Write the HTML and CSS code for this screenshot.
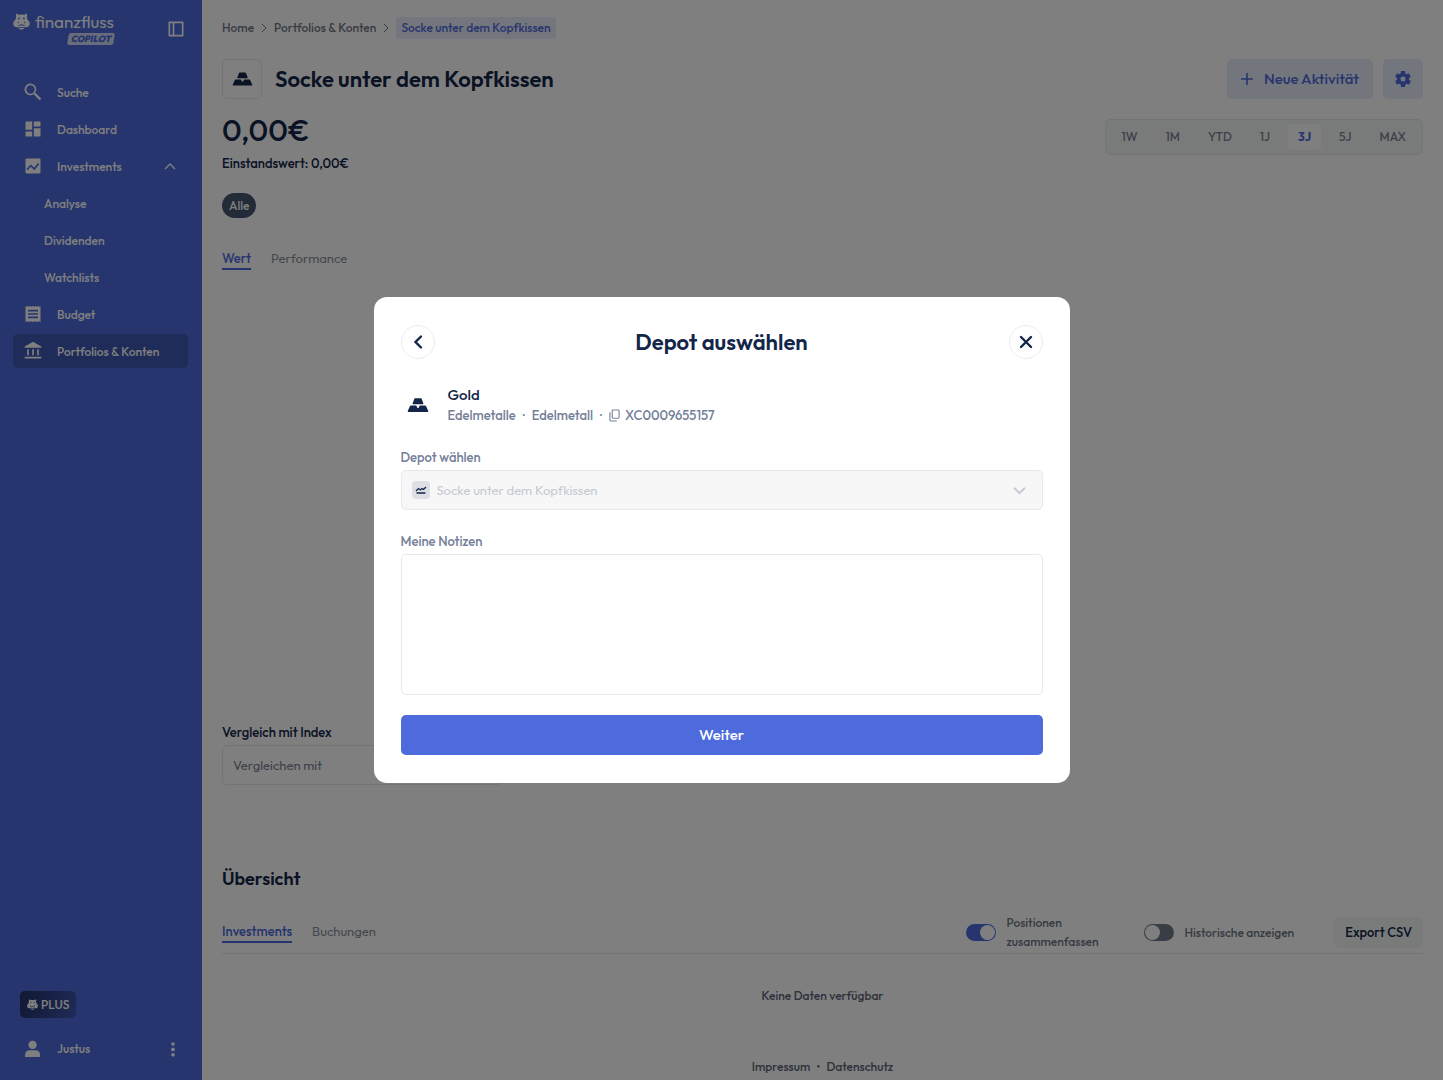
FILE: index.html
```
<!DOCTYPE html>
<html lang="de">
<head>
    <meta charset="UTF-8">
    <meta name="viewport" content="width=device-width, initial-scale=1.0">
    <title>Socke unter dem Kopfkissen | Finanzfluss Copilot</title>
    <link rel="stylesheet" href="styles.css">
</head>
<body>
    <svg class="sprite" aria-hidden="true">
        <symbol id="hippo" viewBox="0 0 24 24">
            <path fill-rule="evenodd" d="M6.2 1.2l1.7 1.5c2.6-.6 5.6-.6 8.2 0l1.7-1.5c1-.6 2.2.1 2.3 1.3.1.8-.2 1.5-.6 2 .6 1.4.7 3.2.9 5 2 1.4 3.3 3.4 3.3 5.7 0 3-2.3 5-5.3 5H5.600c-3 0-5.300-2-5.300-5 0-2.300 1.300-4.300 3.300-5.700.2-1.800.3-3.600.9-5-.4-.5-.7-1.200-.6-2 .1-1.200 1.300-1.900 2.300-1.300zM8.500 6.300a1.300 1.300 0 1 0 0 2.600 1.300 1.300 0 0 0 0-2.600zM15.500 6.300a1.300 1.300 0 1 0 0 2.600 1.300 1.300 0 0 0 0-2.600zM7.600 12.500a1 1 0 1 0 0 2 1 1 0 0 0 0-2zM16.400 12.500a1 1 0 1 0 0 2 1 1 0 0 0 0-2zM6.500 17.400c1.600 1 3.500.7 5.500-.6 2 1.300 3.900 1.600 5.500.6l-.4-.8c-1.400.7-3 .4-5.100-1.200-2.100 1.600-3.700 1.900-5.100 1.200z"/>
            <path d="M8 21.200h8c-.5 1.400-2 2.100-4 2.100s-3.500-.7-4-2.100z"/>
        </symbol>
        <symbol id="gold" viewBox="0 0 24 16">
            <path d="M8 1.200Q8.300.5 9 .5h6q.7 0 1 .7L17.900 6.400q.3.800-.6.800H6.700q-.9 0-.6-.8zM3.300 9.200Q3.600 8.500 4.300 8.500h5.300l1 .7.300 1.500q1.100.9 2.200 0l.3-1.500 1-.7h5.300q.7 0 1 .7l2.500 5.400q.4.900-.6.900H1.400q-1 0-.6-.9z"/>
        </symbol>
    </svg>

    <div class="app">
        <aside class="sidebar">
            <div class="sidebar-head">
                <a href="#" class="logo">
                    <svg class="logo-hippo"><use href="#hippo"/></svg>
                    <span class="logo-name">finanzfluss</span>
                    <span class="logo-badge">COPILOT</span>
                </a>
                <button class="icon-button" aria-label="Menü einklappen">
                    <svg class="icon" viewBox="0 0 24 24"><path fill-rule="evenodd" d="M4 3h16q1 0 1 1v16q0 1-1 1H4q-1 0-1-1V4q0-1 1-1zM5 5v14h3V5zM10 5v14h9V5z"/></svg>
                </button>
            </div>

            <nav class="nav">
                <a href="#" class="nav-item">
                    <svg class="icon" viewBox="0 0 24 24"><path d="M15.500 13.500h-.8l-.3-.3A7 7 0 1 0 13.200 14.400l.3.300v.8l6.500 6.500 2-2zM9 14a5 5 0 1 1 0-10 5 5 0 0 1 0 10z"/></svg>
                    <span>Suche</span>
                </a>
                <a href="#" class="nav-item">
                    <svg class="icon" viewBox="0 0 24 24"><path d="M3 13h8V3H3v10zm0 8h8v-6H3v6zm10 0h8V11h-8v10zm0-18v6h8V3h-8z"/></svg>
                    <span>Dashboard</span>
                </a>
                <a href="#" class="nav-item">
                    <svg class="icon" viewBox="0 0 24 24"><path fill-rule="evenodd" d="M4.500 3h15Q21 3 21 4.500v15q0 1.500-1.500 1.500h-15Q3 21 3 19.500v-15Q3 3 4.500 3zM5.500 17l4-4 4 4 6-7.200-1.500-1.300-4.600 5.500-3.900-3.900L4.400 15.200z"/></svg>
                    <span>Investments</span>
                    <svg class="nav-arrow" viewBox="0 0 12 12"><path d="M1 9l5-5 5 5"/></svg>
                </a>
                <a href="#" class="nav-item nav-sub"><span>Analyse</span></a>
                <a href="#" class="nav-item nav-sub"><span>Dividenden</span></a>
                <a href="#" class="nav-item nav-sub"><span>Watchlists</span></a>
                <a href="#" class="nav-item">
                    <svg class="icon" viewBox="0 0 24 24"><path fill-rule="evenodd" d="M3 2l1.500 1.500L6 2l1.500 1.500L9 2l1.500 1.500L12 2l1.500 1.500L15 2l1.500 1.500L18 2l1.500 1.500L21 2v20l-1.500-1.500L18 22l-1.500-1.500L15 22l-1.500-1.500L12 22l-1.500-1.500L9 22l-1.500-1.500L6 22l-1.500-1.500L3 22zM6 7v2h12V7zM6 11v2h12v-2zM6 15v2h12v-2z"/></svg>
                    <span>Budget</span>
                </a>
                <a href="#" class="nav-item nav-active">
                    <svg class="icon" viewBox="0 0 24 24"><path d="M12 1l10 5.500V8H2V6.500zM5 10h2v7H5zM11 10h2v7h-2zM17 10h2v7h-2zM2 19h20v2H2z"/></svg>
                    <span>Portfolios &amp; Konten</span>
                </a>
            </nav>

            <div class="sidebar-foot">
                <button class="plus-button"><svg class="plus-hippo"><use href="#hippo"/></svg>PLUS</button>
                <div class="user">
                    <svg class="icon" viewBox="0 0 24 24"><circle cx="11.500" cy="7" r="5"/><path d="M2.500 21.500v-2q0-6 6-6h6q6 0 6 6v2z"/></svg>
                    <span>Justus</span>
                    <button class="icon-button user-menu" aria-label="Benutzermenü">
                        <svg class="icon" viewBox="0 0 24 24"><circle cx="12" cy="6" r="2.200"/><circle cx="12" cy="12.500" r="2.200"/><circle cx="12" cy="19" r="2.200"/></svg>
                    </button>
                </div>
            </div>
        </aside>

        <main class="main">
            <nav class="breadcrumb" aria-label="Breadcrumb">
                <a href="#">Home</a>
                <svg class="crumb-arrow" viewBox="0 0 8 12"><path d="M2 2l4 4-4 4"/></svg>
                <a href="#">Portfolios &amp; Konten</a>
                <svg class="crumb-arrow" viewBox="0 0 8 12"><path d="M2 2l4 4-4 4"/></svg>
                <a href="#" class="crumb-current">Socke unter dem Kopfkissen</a>
            </nav>

            <header class="page-head">
                <div class="page-icon"><svg class="gold-small"><use href="#gold"/></svg></div>
                <h1>Socke unter dem Kopfkissen</h1>
                <button class="soft-button">
                    <svg class="plus-sign" viewBox="0 0 12 12"><path d="M6 0v12M0 6h12"/></svg>
                    Neue Aktivität
                </button>
                <button class="soft-button soft-square" aria-label="Einstellungen">
                    <svg class="icon" viewBox="0 0 24 24"><path d="M19.140 12.940c.04-.3.06-.61.06-.94 0-.32-.02-.64-.07-.94l2.030-1.580c.18-.14.23-.41.12-.61l-1.920-3.320c-.12-.22-.37-.29-.59-.22l-2.390.96c-.5-.38-1.030-.7-1.620-.94l-.36-2.540c-.04-.24-.24-.41-.48-.41h-3.840c-.24 0-.43.17-.47.41l-.36 2.540c-.59.24-1.130.57-1.620.94l-2.390-.96c-.22-.08-.47 0-.59.22L2.740 8.870c-.12.21-.08.47.12.61l2.030 1.580c-.05.3-.09.63-.09.94s.02.64.07.94l-2.030 1.580c-.18.14-.23.41-.12.61l1.920 3.320c.12.22.37.29.59.22l2.390-.96c.5.38 1.030.7 1.620.94l.36 2.540c.05.24.24.41.48.41h3.840c.24 0 .44-.17.47-.41l.36-2.540c.59-.24 1.130-.56 1.620-.94l2.390.96c.22.08.47 0 .59-.22l1.920-3.320c.12-.22.07-.47-.12-.61l-2.010-1.580zM12 15a3 3 0 1 1 0-6 3 3 0 0 1 0 6z"/></svg>
                </button>
            </header>

            <section class="summary">
                <div>
                    <p class="amount">0,00€</p>
                    <p class="cost">Einstandswert: 0,00€</p>
                </div>
                <div class="ranges">
                    <button>1W</button>
                    <button>1M</button>
                    <button>YTD</button>
                    <button>1J</button>
                    <button class="range-active">3J</button>
                    <button>5J</button>
                    <button>MAX</button>
                </div>
            </section>

            <button class="pill">Alle</button>

            <div class="tabs">
                <button class="tab tab-active">Wert</button>
                <button class="tab">Performance</button>
            </div>

            <div class="chart"></div>

            <label class="compare-label" for="compare">Vergleich mit Index</label>
            <input class="compare-input" id="compare" type="text" placeholder="Vergleichen mit">

            <h2>Übersicht</h2>
            <div class="overview-bar">
                <div class="tabs">
                    <button class="tab tab-active">Investments</button>
                    <button class="tab">Buchungen</button>
                </div>
                <div class="overview-tools">
                    <div class="switch">
                        <input type="checkbox" id="merge" checked>
                        <label class="switch-narrow" for="merge">Positionen zusammenfassen</label>
                    </div>
                    <div class="switch">
                        <input type="checkbox" id="history">
                        <label for="history">Historische anzeigen</label>
                    </div>
                    <button class="export-button">Export CSV</button>
                </div>
            </div>
            <p class="empty">Keine Daten verfügbar</p>

            <footer class="footer">
                <a href="#">Impressum</a><span>•</span><a href="#">Datenschutz</a>
            </footer>
        </main>
    </div>

    <div class="overlay">
        <div class="modal" role="dialog" aria-modal="true" aria-labelledby="modalTitle">
            <div class="modal-head">
                <button class="round-button" aria-label="Zurück">
                    <svg viewBox="0 0 16 16"><path d="M11 2.500L5.500 8l5.500 5.500"/></svg>
                </button>
                <h2 id="modalTitle">Depot auswählen</h2>
                <button class="round-button" aria-label="Schließen">
                    <svg viewBox="0 0 16 16"><path d="M3 3l10 10M13 3L3 13"/></svg>
                </button>
            </div>

            <div class="asset">
                <svg class="gold-large"><use href="#gold"/></svg>
                <div>
                    <p class="asset-name">Gold</p>
                    <p class="asset-info">
                        <span>Edelmetalle</span><span>·</span><span>Edelmetall</span><span>·</span>
                        <span class="isin"><svg viewBox="0 0 12 14"><path d="M4.500 1h5.500q1 0 1 1v7q0 1-1 1H4.500q-1 0-1-1V2q0-1 1-1zM1 3.500v8.500q0 1 1 1h6.500"/></svg>XC0009655157</span>
                    </p>
                </div>
            </div>

            <form>
                <label for="depot">Depot wählen</label>
                <div class="select-field">
                    <span class="depot-icon"><svg viewBox="0 0 12 12"><path d="M1 7l2.500-2.500L5.500 6l1.500-1.500L8.500 5.500 11 3M1.500 9h9"/></svg></span>
                    <select id="depot" disabled>
                        <option>Socke unter dem Kopfkissen</option>
                    </select>
                    <svg class="select-arrow" viewBox="0 0 12 12"><path d="M1 3.500l5 5 5-5"/></svg>
                </div>
                <label for="notes">Meine Notizen</label>
                <textarea id="notes"></textarea>
                <button type="button" class="primary-button">Weiter</button>
            </form>
        </div>
    </div>
</body>
</html>
```

FILE: styles.css
```
* {
    box-sizing: border-box;
}
body {
    margin: 0;
    font-family: Outfit, Lato, sans-serif;
    font-size: 13px;
    line-height: 20px;
    font-weight: 500;
    color: #132649;
    background-color: #ffffff;
}
h1, h2, p {
    margin: 0;
}
a {
    color: inherit;
    text-decoration: none;
}
button, input, select, textarea {
    font: inherit;
    color: inherit;
}
button {
    border: none;
    background: none;
    padding: 0;
    cursor: pointer;
}
svg {
    flex-shrink: 0;
}
.sprite {
    display: none;
}
.icon {
    width: 20px;
    height: 20px;
    fill: currentColor;
    display: block;
}
.app {
    display: flex;
    min-height: 100vh;
}

/* Sidebar */
.sidebar {
    position: sticky;
    top: 0;
    width: 202px;
    height: 100vh;
    flex-shrink: 0;
    display: flex;
    flex-direction: column;
    padding: 10px 14px 21px 13px;
    background-color: #4d6bdd;
    color: #ffffff;
    font-size: 12px;
}
.sidebar-head {
    display: flex;
    justify-content: space-between;
    align-items: flex-start;
    height: 65px;
}
.sidebar-head .icon-button {
    padding: 9px 2px;
}
.logo {
    display: grid;
    grid-template-columns: 17px auto;
    column-gap: 5px;
}
.logo-hippo {
    width: 17px;
    height: 17px;
    fill: currentColor;
    margin-top: 3px;
}
.logo-name {
    font-size: 17px;
    line-height: 23px;
    font-weight: 400;
}
.logo-badge {
    position: relative;
    z-index: 0;
    grid-column: 2;
    justify-self: end;
    padding: 0 3px;
    font-size: 9px;
    line-height: 12px;
    font-style: italic;
    font-weight: 900;
    color: #4d6bdd;
}
.logo-badge::before {
    content: "";
    position: absolute;
    inset: 0;
    z-index: -1;
    border-radius: 2px;
    background-color: #d3dbf7;
    transform: skewX(-10deg);
}
.nav {
    display: flex;
    flex-direction: column;
    gap: 3px;
}
.nav-item {
    display: flex;
    align-items: center;
    gap: 14px;
    height: 34px;
    padding: 0 12px 0 10px;
    border-radius: 5px;
}
.nav-item span {
    padding-top: 2px;
}
.nav-sub {
    padding-left: 31px;
}
.nav-active {
    background-color: #3f56b0;
}
.nav-arrow {
    width: 12px;
    height: 12px;
    margin-left: auto;
    fill: none;
    stroke: currentColor;
    stroke-width: 1.4;
}
.sidebar-foot {
    margin-top: auto;
}
.plus-button {
    display: flex;
    align-items: center;
    gap: 3px;
    height: 27px;
    margin-left: 7px;
    padding: 0 7px;
    border-radius: 5px;
    background: linear-gradient(110deg, #233066, #3f56b0);
}
.plus-hippo {
    width: 11px;
    height: 11px;
    fill: currentColor;
}
.user {
    display: flex;
    align-items: center;
    gap: 14px;
    margin-top: 18px;
    padding: 3px 5px 0 10px;
}
.user-menu {
    margin-left: auto;
}

/* Main content */
.main {
    flex: 1;
    min-width: 0;
    display: flex;
    flex-direction: column;
    align-items: stretch;
    padding: 17px 20px 3px;
}
.breadcrumb {
    display: flex;
    align-items: center;
    gap: 6px;
    font-size: 12px;
    line-height: 22px;
    color: #6f7788;
}
.crumb-arrow {
    width: 8px;
    height: 12px;
    fill: none;
    stroke: currentColor;
}
.crumb-current {
    padding: 0 5px;
    border-radius: 4px;
    background-color: #e9ecfa;
    color: #4d6bdd;
}
.page-head {
    display: flex;
    align-items: center;
    gap: 10px;
    margin-top: 20px;
}
.page-icon {
    display: flex;
    align-items: center;
    justify-content: center;
    width: 40px;
    height: 40px;
    border: 1px solid #e6e8ec;
    border-radius: 5px;
}
.gold-small {
    width: 21px;
    height: 14px;
    fill: currentColor;
}
h1 {
    flex: 1;
    padding-left: 3px;
    font-size: 22px;
    line-height: 32px;
    font-weight: 600;
}
.soft-button {
    display: flex;
    align-items: center;
    gap: 11px;
    height: 40px;
    padding: 0 14px;
    border-radius: 5px;
    background-color: #e9ecfa;
    color: #4d6bdd;
    font-size: 15px;
}
.soft-square {
    padding: 0 10px;
}
.plus-sign {
    width: 12px;
    height: 12px;
    fill: none;
    stroke: currentColor;
    stroke-width: 1.6;
}
.summary {
    display: flex;
    justify-content: space-between;
    align-items: flex-start;
    margin-top: 12px;
}
.summary > div:first-child {
    padding-top: 7px;
}
.ranges {
    display: flex;
    gap: 8px;
    margin-top: 8px;
    padding: 4px 6px;
    border: 1px solid #e6ebeb;
    border-radius: 5px;
    background-color: #f2f7f6;
    color: #7a8294;
    font-size: 12px;
}
.ranges button {
    height: 26px;
    padding: 0 10px;
    border-radius: 4px;
}
.ranges .range-active {
    background-color: #ffffff;
    color: #4d6bdd;
    font-weight: 700;
}
.amount {
    font-size: 30px;
    line-height: 24px;
}
.cost {
    margin-top: 11px;
}
.pill {
    align-self: flex-start;
    height: 25px;
    margin-top: 20px;
    padding: 0 7px;
    border-radius: 13px;
    background-color: #45566f;
    color: #ffffff;
    font-size: 12px;
}
.tabs {
    display: flex;
    gap: 20px;
}
.pill + .tabs {
    margin-top: 30px;
}
.tab {
    border-bottom: 2px solid transparent;
    color: #8a909c;
    font-weight: 400;
}
.tab-active {
    border-color: #4d6bdd;
    color: #4d6bdd;
    font-weight: 500;
}
.chart {
    flex: 1;
    min-height: 420px;
}
.compare-label {
    margin-bottom: 3px;
}
.compare-input {
    width: 280px;
    height: 40px;
    padding: 0 10px;
    border: 1px solid #e6e8ec;
    border-radius: 5px;
    font-weight: 400;
}
.compare-input::placeholder {
    color: #7a8294;
}
.main h2 {
    margin-top: 80px;
    font-size: 18px;
    line-height: 28px;
    font-weight: 600;
}
.overview-bar {
    display: flex;
    justify-content: space-between;
    align-items: center;
    margin-top: 20px;
    padding-bottom: 2px;
    border-bottom: 1px solid #e6e8ec;
}
.overview-tools {
    display: flex;
    align-items: center;
    gap: 40px;
}
.switch {
    display: flex;
    align-items: center;
    gap: 10px;
    color: #6f7788;
    font-size: 12px;
    line-height: 19px;
}
.switch-narrow {
    width: 98px;
}
.switch input {
    appearance: none;
    flex-shrink: 0;
    width: 30px;
    height: 17px;
    margin: 0;
    padding: 1px;
    border-radius: 9px;
    background-color: #737b8c;
}
.switch input::before {
    content: "";
    display: block;
    width: 15px;
    height: 15px;
    border-radius: 50%;
    background-color: #ffffff;
}
.switch input:checked {
    background-color: #4d6bdd;
}
.switch input:checked::before {
    margin-left: auto;
}
.export-button {
    height: 31px;
    padding: 0 11px;
    border-radius: 5px;
    background-color: #f2f7f6;
}
.empty, .footer {
    text-align: center;
    color: #5b6579;
    font-size: 12px;
}
.empty {
    margin-top: 32px;
}
.footer {
    display: flex;
    justify-content: center;
    gap: 6px;
    margin-top: 51px;
}

/* Modal */
.overlay {
    position: fixed;
    inset: 0;
    display: flex;
    align-items: center;
    justify-content: center;
    background-color: rgba(0, 0, 0, 0.5);
}
.modal {
    width: 100%;
    max-width: 696px;
    padding: 28px 27px;
    border-radius: 13px;
    background-color: #ffffff;
}
.modal-head {
    display: flex;
    align-items: center;
    justify-content: space-between;
}
.modal-head h2 {
    font-size: 22px;
    line-height: 32px;
    font-weight: 600;
}
.round-button {
    display: flex;
    align-items: center;
    justify-content: center;
    width: 34px;
    height: 34px;
    border: 1px solid #ececef;
    border-radius: 50%;
}
.round-button svg {
    width: 16px;
    height: 16px;
    fill: none;
    stroke: currentColor;
    stroke-width: 2.4;
    stroke-linecap: round;
}
.asset {
    display: flex;
    align-items: center;
    gap: 19px;
    margin-top: 26px;
    padding-left: 6px;
}
.gold-large {
    width: 22px;
    height: 16px;
    fill: currentColor;
}
.asset-name {
    font-size: 15px;
}
.asset-info {
    display: flex;
    gap: 7px;
    color: #748099;
}
.isin {
    display: flex;
    align-items: center;
    gap: 5px;
}
.isin svg {
    width: 11px;
    height: 13px;
    fill: none;
    stroke: currentColor;
    stroke-width: 1.2;
}
form {
    margin-top: 22px;
}
form label {
    display: block;
    margin-bottom: 3px;
    color: #748099;
}
.select-field {
    display: flex;
    align-items: center;
    height: 40px;
    margin-bottom: 21px;
    padding: 0 16px 0 10px;
    border: 1px solid #e6e8ec;
    border-radius: 5px;
    background-color: #f7f7f7;
}
.depot-icon {
    width: 18px;
    height: 18px;
    padding: 3px;
    border-radius: 4px;
    background-color: #dcdfe4;
}
.depot-icon svg {
    display: block;
    width: 12px;
    height: 12px;
    fill: none;
    stroke: currentColor;
    stroke-width: 1.3;
}
.select-field select {
    appearance: none;
    flex: 1;
    padding: 0 7px;
    border: none;
    background: none;
    color: #c5cad4;
    font-weight: 400;
    opacity: 1;
}
.select-arrow {
    width: 13px;
    height: 13px;
    fill: none;
    stroke: #c5cad4;
    stroke-width: 1.8;
}
textarea {
    display: block;
    width: 100%;
    height: 141px;
    margin-bottom: 20px;
    padding: 10px;
    border: 1px solid #e6e8ec;
    border-radius: 5px;
    resize: none;
}
.primary-button {
    display: block;
    width: 100%;
    height: 40px;
    border-radius: 5px;
    background-color: #4d6bdd;
    color: #ffffff;
    font-size: 15px;
}
```
